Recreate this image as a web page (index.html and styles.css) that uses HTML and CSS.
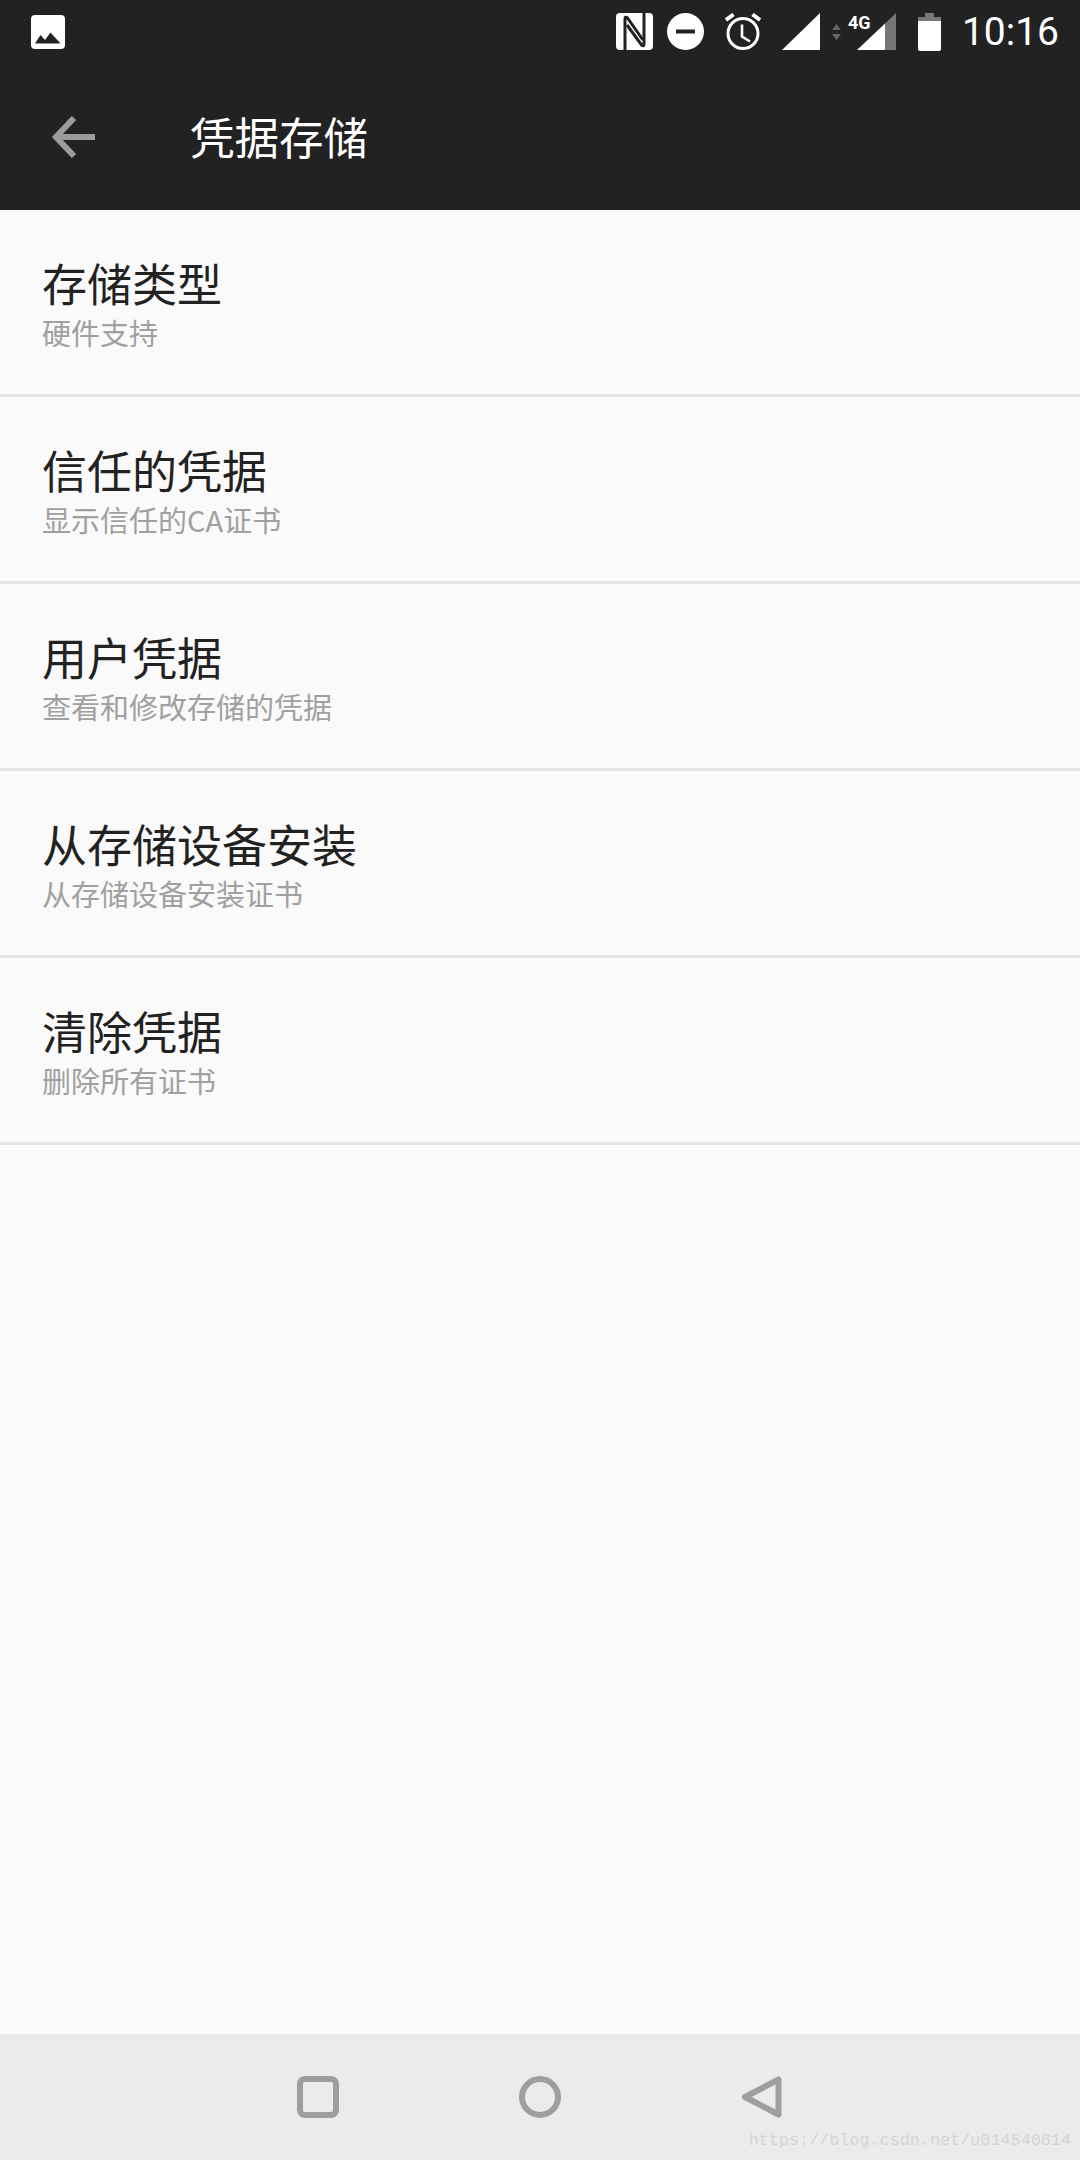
FILE: index.html
```html
<!DOCTYPE html>
<html>
	<head>
		<meta name="viewport" content="width=device-width, initial-scale=1.0">
		<meta charset="UTF-8">
		<title>凭据存储</title>
		<link rel="stylesheet" href="styles.css">
	</head>
	<body>
		<div class="page">
			<header class="app-bar">
				<div class="status-bar">
					<svg class="ic-image" width="34" height="34" viewBox="0 0 34 34">
						<rect width="34" height="34" rx="4" fill="#fff"/>
						<path d="M4 28.5 L9.5 20 L14 25 L19.5 17.5 L29.5 28.5 Z" fill="#222"/>
					</svg>
					<div class="status-icons">
						<svg class="ic-nfc" width="37" height="37" viewBox="0 0 37 37">
							<rect width="37" height="37" rx="4" fill="#fff"/>
							<path d="M9 37 V6 Q9 3 11.5 5 L27 27" fill="none" stroke="#222" stroke-width="3"/>
							<path d="M28 0 V31 Q28 34 25.5 32 L11 12" fill="none" stroke="#222" stroke-width="3"/>
						</svg>
						<svg class="ic-dnd" width="37" height="37" viewBox="0 0 37 37">
							<circle cx="18.5" cy="18.5" r="18.5" fill="#fff"/>
							<rect x="9" y="16.5" width="19" height="4" fill="#222"/>
						</svg>
						<svg class="ic-alarm" width="36" height="37" viewBox="0 0 36 37">
							<circle cx="18" cy="20.5" r="15" fill="none" stroke="#fff" stroke-width="3"/>
							<path d="M17 11.5 V23.5 L25 28.5" fill="none" stroke="#fff" stroke-width="2.6"/>
							<path d="M1 7 L8.5 1.5 M35 7 L27.5 1.5" stroke="#fff" stroke-width="4"/>
						</svg>
						<svg class="ic-signal" width="38" height="37" viewBox="0 0 38 37">
							<path d="M0 37 L38 0 V37 Z" fill="#fff"/>
						</svg>
						<svg class="ic-updown" width="9" height="18" viewBox="0 0 9 18">
							<path d="M0 7 L4.5 1 L9 7 Z M0 11 H9 L4.5 17 Z" fill="#666"/>
						</svg>
						<div class="signal-4g">
							<span class="label-4g">4G</span>
							<svg width="39" height="37" viewBox="0 0 39 37">
								<path d="M0 37 L28 10.4 V37 Z" fill="#fff"/>
								<path d="M28 10.4 L39 0 V37 H28 Z" fill="#777"/>
							</svg>
						</div>
						<svg class="ic-battery" width="23" height="38" viewBox="0 0 23 38">
							<path d="M7 0 H16 V4 H23 V36 Q23 38 21 38 H2 Q0 38 0 36 V4 H7 Z" fill="#fff"/>
							<path d="M7 0 H16 V4 H7 Z M0 4 H23 V8 H0 Z" fill="#777"/>
						</svg>
						<span class="clock">10:16</span>
					</div>
				</div>
				<div class="toolbar">
					<svg class="ic-back" width="44" height="42" viewBox="0 0 44 42">
						<path d="M22 2 L4 21 L22 40 M4 21 H43" fill="none" stroke="#9b9b9b" stroke-width="6"/>
					</svg>
					<h1 class="toolbar-title">凭据存储</h1>
				</div>
			</header>

			<main class="settings-list">
				<div class="row">
					<div class="row-title">存储类型</div>
					<div class="row-sub">硬件支持</div>
				</div>
				<div class="row">
					<div class="row-title">信任的凭据</div>
					<div class="row-sub">显示信任的CA证书</div>
				</div>
				<div class="row">
					<div class="row-title">用户凭据</div>
					<div class="row-sub">查看和修改存储的凭据</div>
				</div>
				<div class="row">
					<div class="row-title">从存储设备安装</div>
					<div class="row-sub">从存储设备安装证书</div>
				</div>
				<div class="row">
					<div class="row-title">清除凭据</div>
					<div class="row-sub">删除所有证书</div>
				</div>
			</main>

			<nav class="nav-bar">
				<svg width="42" height="42" viewBox="0 0 42 42">
					<rect x="3" y="3" width="36" height="36" rx="5" fill="none" stroke="#9e9e9e" stroke-width="6"/>
				</svg>
				<svg width="42" height="42" viewBox="0 0 42 42">
					<circle cx="21" cy="21" r="18" fill="none" stroke="#9e9e9e" stroke-width="6"/>
				</svg>
				<svg width="42" height="42" viewBox="0 0 42 42">
					<path d="M37.5 3.5 V38.5 L4 21 Z" fill="none" stroke="#9e9e9e" stroke-width="6" stroke-linejoin="round"/>
				</svg>
				<span class="watermark">https://blog.csdn.net/u014540814</span>
			</nav>
		</div>
	</body>
</html>
```

FILE: styles.css
```css
* {
	box-sizing: border-box;
}

body {
	margin: 0;
	background-color: #fafafa;
	font-family: "Noto Sans CJK SC", "Noto Sans", sans-serif;
}

.page {
	display: flex;
	flex-direction: column;
	height: 2160px;
}

.app-bar {
	background-color: #222222;
	color: white;
	height: 210px;
}

.status-bar {
	display: flex;
	justify-content: space-between;
	align-items: center;
	height: 63px;
	padding: 0 21px 0 31px;
}

.status-icons {
	display: flex;
	align-items: center;
}

.ic-dnd { margin-left: 14px; }
.ic-alarm { margin-left: 21px; }
.ic-signal { margin-left: 21px; }
.ic-updown { margin-left: 12px; }
.signal-4g { margin-left: 16px; position: relative; }
.ic-battery { margin-left: 22px; }

.signal-4g svg {
	display: block;
}

.label-4g {
	position: absolute; /* sits over the corner of the signal triangle */
	left: -9px;
	top: 1px;
	font-family: Roboto, sans-serif;
	font-size: 18px;
	font-weight: 700;
	line-height: 18px;
}

.clock {
	margin-left: 21px;
	font-family: Roboto, sans-serif;
	font-size: 39px;
}

.toolbar {
	display: flex;
	align-items: center;
	height: 147px;
	padding-left: 52px;
}

.toolbar-title {
	margin: 0 0 2px 94px;
	font-size: 44.5px;
	font-weight: 400;
	line-height: 60px;
}

.settings-list {
	flex: 1;
}

.row {
	display: flex;
	flex-direction: column;
	justify-content: center;
	height: 187px;
	padding: 1px 0 0 42px;
	border-bottom: 3px solid #e4e4e4;
}

.row-title {
	color: #222222;
	font-size: 45px;
	line-height: 58px;
}

.row-sub {
	margin-top: 1px;
	color: #a0a0a0;
	font-size: 29px;
	line-height: 38px;
}

.nav-bar {
	position: relative;
	display: flex;
	justify-content: center;
	align-items: center;
	gap: 180px;
	height: 126px;
	background-color: #ebebeb;
}

.watermark {
	position: absolute; /* stamped over the bottom corner of the image */
	right: 9px;
	bottom: 10px;
	color: #d4d4d4;
	font-family: "Liberation Mono", monospace;
	font-size: 16.8px;
}
```
